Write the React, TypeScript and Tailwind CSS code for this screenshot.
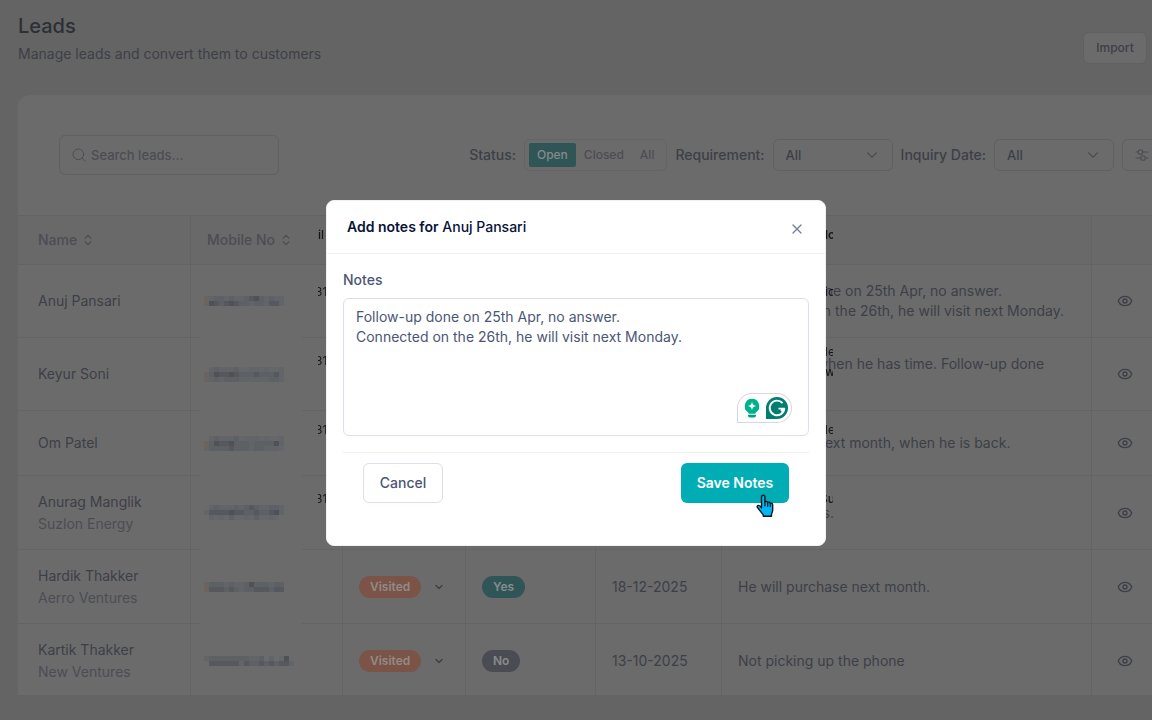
import React, { useState } from "react";
import { ChevronDown, ChevronsUpDown, Eye, Search, X } from "lucide-react";

type Lead = {
  name: string;
  company?: string;
  mask: string[];
  status: string;
  requirement: "Yes" | "No";
  date: string;
  notes: string[];
  height: string;
};

const leads: Lead[] = [
  {
    name: "Anuj Pansari",
    mask: ["1344343345643433", "1654565443443553"],
    status: "Visited",
    requirement: "Yes",
    date: "25-04-2025",
    notes: ["Follow-up done on 25th Apr, no answer.", "Connected on the 26th, he will visit next Monday."],
    height: "h-[73px]",
  },
  {
    name: "Keyur Soni",
    mask: ["0343334223323223", "1465565444544453", "1343444333333443"],
    status: "Visited",
    requirement: "Yes",
    date: "24-04-2025",
    notes: ["He will visit when he has time. Follow-up done", "on 25th Apr."],
    height: "h-[73px]",
  },
  {
    name: "Om Patel",
    mask: ["0343334233323223", "1465564443444463", "1444454443443332"],
    status: "Visited",
    requirement: "Yes",
    date: "22-04-2025",
    notes: ["He will visit next month, when he is back."],
    height: "h-[65px]",
  },
  {
    name: "Anurag Manglik",
    company: "Suzlon Energy",
    mask: ["0343334345433443", "1555565544544563", "0323242232422320"],
    status: "Visited",
    requirement: "Yes",
    date: "20-04-2025",
    notes: ["Visit in 2 days."],
    height: "h-[74px]",
  },
  {
    name: "Hardik Thakker",
    company: "Aerro Ventures",
    mask: ["1444343346444344", "1555454344555455"],
    status: "Visited",
    requirement: "Yes",
    date: "18-12-2025",
    notes: ["He will purchase next month."],
    height: "h-[74px]",
  },
  {
    name: "Kartik Thakker",
    company: "New Ventures",
    mask: ["144444444334030260", "055555535445454553"],
    status: "Visited",
    requirement: "No",
    date: "13-10-2025",
    notes: ["Not picking up the phone"],
    height: "h-[74px]",
  },
];

const shades = ["#6b6b6b", "#696460", "#66676a", "#616469", "#5d6065", "#57585d", "#505154"];

function MaskedNumber({ rows }: { rows: string[] }) {
  const width = rows[0].length * 5;
  const height = rows.length * 5;
  return (
    <svg width={width} height={height} viewBox={`0 0 ${width} ${height}`} shapeRendering="crispEdges" role="img" aria-label="Hidden number" className="block">
      {rows.flatMap((row, y) =>
        row.split("").map((s, x) => <rect key={`${x}-${y}`} x={x * 5} y={y * 5} width="5" height="5" fill={shades[Number(s)]} />),
      )}
    </svg>
  );
}

function SlidersIcon() {
  return (
    <svg width="14" height="14" viewBox="0 0 14 14" fill="none" stroke="currentColor" strokeWidth="1.1" strokeLinecap="round" aria-hidden="true">
      <circle cx="5.500" cy="4" r="2.300" />
      <circle cx="8" cy="10" r="2.300" />
      <path d="M1 4h2.200M7.800 4H13M1 10h4.700M10.300 10H13" />
    </svg>
  );
}

function FilterSelect({ id, label }: { id: string; label: string }) {
  return (
    <div className="flex items-center gap-2">
      <label htmlFor={id} className="text-sm font-medium">
        {label}
      </label>
      <div className="relative">
        <select id={id} className="block h-8 w-[120px] appearance-none rounded-md border border-[#606063] bg-transparent px-3 text-[13px] font-medium">
          <option>All</option>
        </select>
        <ChevronDown size={18} strokeWidth={1.5} className="pointer-events-none absolute top-[7px] right-3 text-[#4c4d53]" />
      </div>
    </div>
  );
}

function HeadCell({ children, sortable }: { children?: React.ReactNode; sortable?: boolean }) {
  return (
    <th scope="col" className="border-y border-r border-[#646465] px-4 text-left font-medium first:pl-5 last:border-r-0">
      <span className="flex items-center gap-1">
        {children}
        {sortable && <ChevronsUpDown size={14} />}
      </span>
    </th>
  );
}

const cell = "border-r border-b border-[#646465] px-4";

function LeadRow({ lead }: { lead: Lead }) {
  return (
    <tr className={lead.height}>
      <td className={`${cell} pl-5 leading-[22px]`}>
        <div>{lead.name}</div>
        {lead.company && <div className="text-[#4c4d53]">{lead.company}</div>}
      </td>
      <td className="relative border-r border-b border-[#646465] pl-[13px]">
        <MaskedNumber rows={lead.mask} />
        <span className="absolute -bottom-px left-[10px] h-px w-[101px] bg-[#6b6b6b]" />
      </td>
      <td className={cell}>
        <div className="flex items-center gap-3">
          <span className="rounded-full bg-[#7b5447] px-[11px] py-[3px] text-xs leading-4 font-semibold text-[#918a88]">{lead.status}</span>
          <button type="button" aria-label={`Change status of ${lead.name}`}>
            <ChevronDown size={12} strokeWidth={2.5} />
          </button>
        </div>
      </td>
      <td className={cell}>
        <span
          className={`block w-fit rounded-full px-[11px] py-[3px] text-xs leading-4 font-semibold text-[#888b8c] ${
            lead.requirement === "Yes" ? "bg-[#305557]" : "bg-[#4a4b53]"
          }`}
        >
          {lead.requirement}
        </span>
      </td>
      <td className={cell}>{lead.date}</td>
      <td className={`${cell} whitespace-nowrap`}>
        {lead.notes.map((line) => (
          <div key={line}>{line}</div>
        ))}
      </td>
      <td className="border-b border-[#646465] pl-[25px]">
        <button type="button" aria-label={`View ${lead.name}`} className="block">
          <Eye size={16} />
        </button>
      </td>
    </tr>
  );
}

function StrayText() {
  const items = [
    { text: "il", place: "top-[26px] left-0 font-medium" },
    { text: "31", place: "top-[83px] -left-[3px]" },
    { text: "31", place: "top-[152px] -left-[3px]" },
    { text: "31", place: "top-[221px] -left-[3px]" },
    { text: "31", place: "top-[290px] -left-[3px]" },
    { text: "No", place: "top-[26px] left-[501px] font-semibold" },
    { text: "ic", place: "top-[83px] left-[507px]" },
    { text: "He", place: "top-[143px] left-[501px]" },
    { text: "w", place: "top-[163px] left-[507px] font-medium" },
    { text: "He", place: "top-[221px] left-[501px]" },
    { text: "Su", place: "top-[290px] left-[502px] font-medium" },
  ];
  return (
    <div aria-hidden="true" className="absolute inset-y-0 -right-[7px] -left-2 overflow-hidden text-xs leading-[18px] text-[#15161b]">
      {items.map((item, i) => (
        <span key={i} className={`absolute ${item.place}`}>
          {item.text}
        </span>
      ))}
    </div>
  );
}

function WritingAssistant() {
  return (
    <div className="absolute right-[17px] bottom-[13px] flex h-[30px] w-[55px] items-center gap-[5px] rounded-t-full rounded-r-full rounded-bl-sm border border-[#d5d5e4] bg-white pl-[5px]">
      <svg width="18" height="20" viewBox="0 0 18 20" aria-hidden="true">
        <path d="M9 .8a7.4 7.4 0 0 0-4.2 13.4c.6.5.9.8.9 1.5h6.6c0-.7.3-1 .9-1.5A7.4 7.4 0 0 0 9 .8Z" fill="#00b18f" />
        <path d="M9 3.8c.5 2.7 1.5 3.7 4.2 4.2-2.7.5-3.7 1.5-4.2 4.2C8.500 9.500 7.500 8.500 4.800 8 7.500 7.500 8.500 6.500 9 3.800Z" fill="#fff" />
        <path d="M5 16.700h8v.8A1.900 1.900 0 0 1 11.100 19.400H6.900A1.900 1.900 0 0 1 5 17.500Z" fill="#00a184" />
      </svg>
      <svg width="22" height="22" viewBox="0 0 22 22" aria-hidden="true">
        <path d="M11 0a11 11 0 1 1 0 22H0V11A11 11 0 0 1 11 0Z" fill="#027e6f" />
        <path d="M16.600 6.200A7.300 7.300 0 1 0 18.300 11.600H12.500M18.300 11.600L15 14" fill="none" stroke="#fff" strokeWidth="1.900" strokeLinejoin="round" />
      </svg>
    </div>
  );
}

function HandCursor() {
  return (
    <svg width="18" height="24" viewBox="0 0 18 24" aria-hidden="true" className="pointer-events-none absolute top-[31px] left-[75px]">
      <path
        d="M5.500 14V3.200C5.500 1.900 6.300 1.200 7.200 1.200S8.900 1.900 8.900 3.200V8.200C9.200 7 11.500 7 11.700 8.700 12.400 7.700 14.200 8 14.300 9.600 15.200 8.900 16.700 9.400 16.700 11V16C16.700 18 15.600 18.700 15.500 20.500V22.200H7.300V20.700C5.500 19.200 3.500 15.800 1.500 13.500.6 12.400 1.400 11.300 2.700 11.400 3.900 11.500 4.700 12.700 5.500 14Z"
        fill="#00b7f5"
        stroke="#10151c"
        strokeWidth="1.400"
        strokeLinejoin="round"
      />
      <path d="M8.900 8v4M11.700 8.700V12.300M14.300 9.600v3" fill="none" stroke="#10151c" strokeWidth="1.200" strokeLinecap="round" />
    </svg>
  );
}

function NotesDialog() {
  const [notes, setNotes] = useState("Follow-up done on 25th Apr, no answer.\nConnected on the 26th, he will visit next Monday.");
  return (
    <div className="fixed inset-0 flex items-start justify-center pt-[200px]">
      <div className="relative w-full max-w-[500px]">
        <StrayText />
        <div role="dialog" aria-modal="true" aria-labelledby="dialog-title" className="relative rounded-lg border border-[#f1f1f4] bg-white pb-[42px] text-[#4b5675]">
          <div className="flex h-[53px] items-center justify-between border-b border-[#f1f1f4] px-5">
            <h2 id="dialog-title" className="text-sm font-medium text-[#071437]">
              <span className="font-semibold">Add notes for</span> Anuj Pansari
            </h2>
            <button type="button" aria-label="Close" className="pt-1 text-[#78829d]">
              <X size={16} strokeWidth={2} />
            </button>
          </div>
          <div className="px-4 pt-4">
            <label htmlFor="notes" className="block text-sm font-medium">
              Notes
            </label>
            <div className="relative mt-2">
              <textarea
                id="notes"
                value={notes}
                onChange={(e) => setNotes(e.target.value)}
                className="block h-[138px] w-full resize-none rounded-md border border-[#dbdfe9] bg-transparent px-3 py-2 text-sm outline-none"
              />
              <WritingAssistant />
            </div>
            <div className="mt-4 flex justify-between border-t border-[#f1f1f4] px-5 pt-[10px]">
              <button type="button" className="h-10 w-20 rounded-md border border-[#dbdfe9] text-sm font-medium">
                Cancel
              </button>
              <div className="relative">
                <button type="button" className="h-10 w-[108px] rounded-md bg-[#00adb5] text-sm font-semibold text-white">
                  Save Notes
                </button>
                <HandCursor />
              </div>
            </div>
          </div>
        </div>
      </div>
    </div>
  );
}

export default function App() {
  return (
    <div className="h-screen overflow-hidden bg-[#646464] font-['Inter',sans-serif] text-sm text-[#3d3f47]">
      <main className="flex h-full flex-col pb-[25px] pl-[18px]">
        <header className="flex h-[95px] shrink-0 items-start justify-between pt-[14px] pr-[5px]">
          <div>
            <h1 className="text-xl leading-6 font-medium text-[#2d2f35]">Leads</h1>
            <p className="mt-[6px]">Manage leads and convert them to customers</p>
          </div>
          <button type="button" className="mt-[18px] h-8 w-16 rounded-md border border-[#606063] bg-[#6b6b6b] text-xs font-medium">
            Import
          </button>
        </header>
        <section className="min-h-0 flex-1 overflow-hidden rounded-tl-xl bg-[#6b6b6b]">
          <div className="flex h-[120px] items-center justify-between pl-[41px]">
            <label className="flex h-10 w-[220px] shrink-0 items-center gap-1 rounded-md border border-[#606063] px-[11px]">
              <Search size={16} strokeWidth={1.5} className="shrink-0 text-[#4c4d53]" />
              <input type="search" aria-label="Search leads" placeholder="Search leads..." className="w-full min-w-0 bg-transparent text-[13px] font-medium outline-none placeholder:text-[#4c4d53]" />
            </label>
            <div className="-mr-[60px] flex shrink-0 items-center gap-2">
              <div className="flex items-center gap-2">
                <span className="font-medium">Status:</span>
                <div className="flex h-8 items-center rounded-md border border-[#646466] px-1 text-xs font-medium text-[#4c4d53]">
                  <button type="button" className="h-6 rounded-xs bg-[#305557] px-2 text-[#878a8b]">
                    Open
                  </button>
                  <button type="button" className="h-6 px-2">
                    Closed
                  </button>
                  <button type="button" className="h-6 px-2">
                    All
                  </button>
                </div>
              </div>
              <FilterSelect id="requirement" label="Requirement:" />
              <FilterSelect id="inquiry-date" label="Inquiry Date:" />
              <button type="button" aria-label="More filters" className="h-8 w-[90px] rounded-md border border-[#606063] pl-3 text-[#4c4d53]">
                <SlidersIcon />
              </button>
            </div>
          </div>
          <table className="w-full table-fixed border-separate border-spacing-0">
            <colgroup>
              <col className="w-[173px]" />
              <col className="w-[152px]" />
              <col className="w-[123px]" />
              <col className="w-[130px]" />
              <col className="w-[126px]" />
              <col className="w-[370px]" />
              <col />
            </colgroup>
            <thead>
              <tr className="h-[50px] bg-[#696969] text-[#4c4d53]">
                <HeadCell sortable>Name</HeadCell>
                <HeadCell sortable>Mobile No</HeadCell>
                <HeadCell>Status</HeadCell>
                <HeadCell>Interested</HeadCell>
                <HeadCell>Date</HeadCell>
                <HeadCell>Notes</HeadCell>
                <HeadCell />
              </tr>
            </thead>
            <tbody>
              {leads.map((lead) => (
                <LeadRow key={lead.name} lead={lead} />
              ))}
            </tbody>
          </table>
        </section>
      </main>
      <NotesDialog />
    </div>
  );
}
